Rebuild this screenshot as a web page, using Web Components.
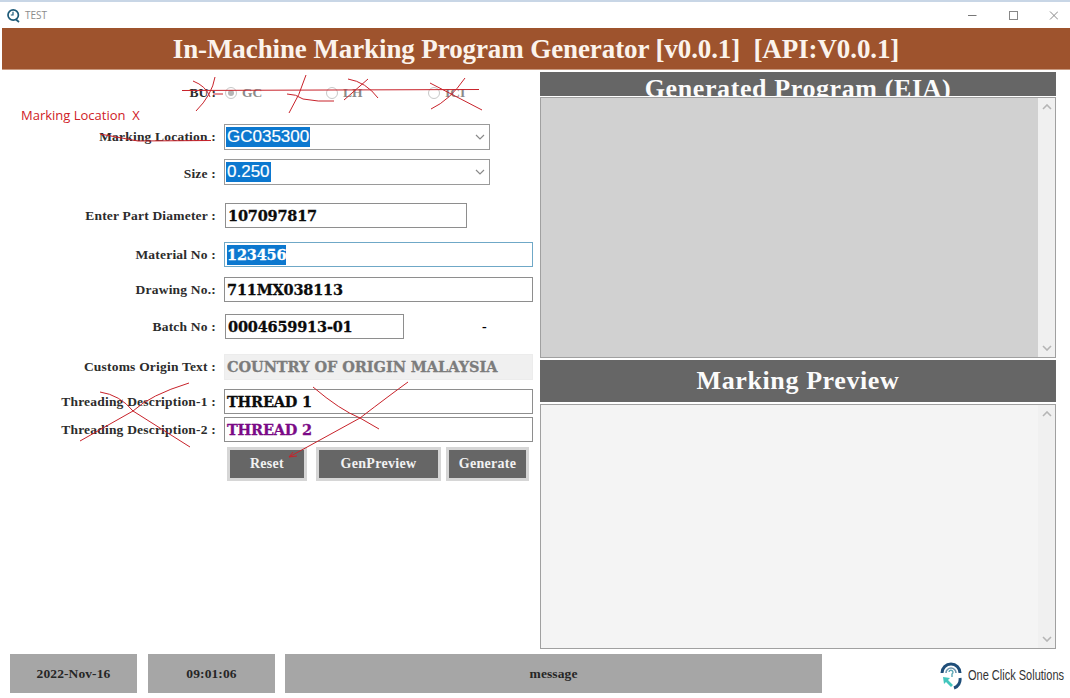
<!DOCTYPE html>
<html><head><meta charset="utf-8">
<style>
html,body{margin:0;padding:0;background:#fff}
body{width:1070px;height:698px;overflow:hidden;position:relative;font-family:"Liberation Serif",serif}
main{display:flex;height:584px}
</style></head>
<body>
<win-bar></win-bar>
<app-header>In-Machine Marking Program Generator [v0.0.1]&nbsp; [API:V0.0.1]</app-header>
<main>
  <form-panel></form-panel>
  <side-panel></side-panel>
</main>
<status-bar></status-bar>
<red-marks></red-marks>
<script>
function def(name,css,html){
  customElements.define(name,class extends HTMLElement{
    constructor(){super();const r=this.attachShadow({mode:'open'});
      r.innerHTML='<style>'+css+'</style>'+html;}
  });
}
const DOWN='<svg width="10" height="6" viewBox="0 0 10 6"><path d="M1 1l4 4 4-4" fill="none" stroke="#8a8a8a" stroke-width="1.2"/></svg>';
const UP='<svg width="10" height="6" viewBox="0 0 10 6"><path d="M1 5l4-4 4 4" fill="none" stroke="#b5b5b5" stroke-width="1.6"/></svg>';
const DOWN2='<svg width="10" height="6" viewBox="0 0 10 6"><path d="M1 1l4 4 4-4" fill="none" stroke="#b5b5b5" stroke-width="1.6"/></svg>';

def('win-bar',`:host{display:flex;align-items:center;height:26px;border-top:2px solid #c8d6e6;background:#fff;font:10px "Open Sans",sans-serif;color:#8b8b8b}
.ic{margin:0 4px 0 6px;display:block}.sp{flex:1}.c{display:flex;align-items:center;margin-right:12px}
.c svg{display:block}`,`
<svg class="ic" width="15" height="15" viewBox="0 0 15 15"><circle cx="7.2" cy="7" r="5.2" fill="none" stroke="#1d5a78" stroke-width="1.7"/><path d="M7 3.8V7H4.8" fill="none" stroke="#1d5a78" stroke-width="1.2"/><path d="M10 11.5l3 2.5" stroke="#1d5a78" stroke-width="1.7"/></svg>
<span>TEST</span><span class="sp"></span>
<span class="c"><svg width="96" height="11" viewBox="0 0 96 11"><path d="M6 5.5h8.5" stroke="#777" fill="none"/><rect x="47.5" y="1.5" width="8" height="8" fill="none" stroke="#888"/><path d="M88 1.5l8 8M96 1.5l-8 8" stroke="#888" fill="none"/></svg></span>`);

def('app-header',`:host{display:block;height:41px;margin:0 0 0 2px;border-bottom:1px solid #c99a80;background:#9e532d;color:#fbf3ec;font:bold 27px/43px "Liberation Serif",serif;text-align:center;letter-spacing:-.1px}`,`<slot></slot>`);

def('form-row',`:host{display:flex;align-items:center;height:var(--h,25px);margin-top:var(--m,0)}
.l{width:216px;text-align:right;font:bold 13.5px "Liberation Serif",serif;color:#2c2c2c;white-space:nowrap;flex:none;letter-spacing:.2px}
.s{flex:none;width:8px}`,`<span class="l"><slot name="label"></slot></span><span class="s"></span><slot></slot>`);

def('text-box',`:host{display:flex;align-items:center;box-sizing:border-box;height:100%;width:309px;border:1px solid #8e8e8e;background:#fff;padding-left:2px;font:bold 14.5px "DejaVu Serif",serif;color:#0b0b0b;white-space:nowrap;overflow:hidden;letter-spacing:-.2px;-webkit-text-stroke:.3px currentColor}
:host([short]){margin-left:1px}
:host([active]){border-color:#6fa8c7}
:host([disabled]){background:#f0f0f0;border-color:#ececec;color:#7c7c7c;letter-spacing:-.05px}
:host([purple]){color:#7b0a86}
span{display:inline-block;line-height:20px}
:host([active]) span{background:#0c78cf;color:#fff}`,`<span><slot></slot></span>`);

def('combo-box',`:host{display:flex;align-items:center;box-sizing:border-box;height:26px;width:266px;border:1px solid #9a9a9a;background:#fff;padding-left:1px;font:17px "Liberation Sans",sans-serif;-webkit-text-stroke:.2px currentColor}
span{background:#0c78cf;color:#fff;line-height:20px;padding:0 1px}
i{flex:1}svg{margin-right:4px}`,`<span><slot></slot></span><i></i>${DOWN}`);

def('radio-opt',`:host{display:inline-flex;align-items:center;gap:5px;font:bold 13.5px "Liberation Serif",serif;color:#8a8a8a;width:var(--w,auto)}
b{display:block;box-sizing:border-box;width:12px;height:12px;border-radius:50%;border:1px solid #c8c8c8;background:#fff}
:host([on]) b::after{content:"";display:block;width:6px;height:6px;margin:2px;border-radius:50%;background:#b5b5b5}`,`<b></b><slot></slot>`);

def('gray-btn',`:host{display:flex;align-items:center;justify-content:center;box-sizing:border-box;height:34px;width:var(--w);background:#666;border:3px solid #d6d6d6;color:#f2f2f2;font:bold 14px "Liberation Serif",serif;letter-spacing:.3px}`,`<slot></slot>`);

def('form-panel',`:host{display:block;flex:none;width:540px;box-sizing:border-box}
.bu{display:flex;align-items:center;height:25px;margin-top:10px}
.bl{width:216px;text-align:right;font:bold 13.5px "Liberation Serif",serif;color:#2c2c2c;flex:none}
.rad{display:flex;margin-left:9px}
.btns{display:flex;margin:5px 0 0 227px;gap:9px}
.btns gray-btn:last-child{margin-left:-4px}
.dash{flex:none;margin-left:78px;font:bold 14px "Liberation Serif",serif}
.low{display:block;padding-top:4px}`,`
<div class="bu"><span class="bl">BU :</span><span class="rad"><radio-opt on style="--w:101px">GC</radio-opt><radio-opt style="--w:102px">LH</radio-opt><radio-opt>ICI</radio-opt></span></div>
<form-row style="--h:26px;--m:19px"><span slot="label">Marking Location :</span><combo-box>GC035300</combo-box></form-row>
<form-row style="--h:26px;--m:9px"><span slot="label" class="low">Size :</span><combo-box>0.250</combo-box></form-row>
<form-row style="--m:18px"><span slot="label">Enter Part Diameter :</span><text-box short style="width:242px">107097817</text-box></form-row>
<form-row style="--m:14px"><span slot="label">Material No :</span><text-box active>123456</text-box></form-row>
<form-row style="--m:10px"><span slot="label">Drawing No.:</span><text-box>711MX038113</text-box></form-row>
<form-row style="--m:12px"><span slot="label">Batch No :</span><text-box short style="width:179px">0004659913-01</text-box><span class="dash">-</span></form-row>
<form-row style="--h:26px;--m:15px"><span slot="label">Customs Origin Text :</span><text-box disabled>COUNTRY OF ORIGIN MALAYSIA</text-box></form-row>
<form-row style="--m:9px"><span slot="label">Threading Description-1 :</span><text-box>THREAD 1</text-box></form-row>
<form-row style="--m:3px"><span slot="label">Threading Description-2 :</span><text-box purple>THREAD 2</text-box></form-row>
<div class="btns"><gray-btn style="--w:80px">Reset</gray-btn><gray-btn style="--w:125px">GenPreview</gray-btn><gray-btn style="--w:83px">Generate</gray-btn></div>`);

def('pane-head',`:host{display:block;background:#666;color:#fbfbfb;text-align:center;font:bold 26px/var(--lh) "Liberation Serif",serif;height:var(--h);overflow:hidden;letter-spacing:.6px;white-space:nowrap}`,`<slot></slot>`);

def('scroll-area',`:host{display:flex;box-sizing:border-box;height:var(--h);border:1px solid #a0a0a0;background:var(--bg)}
.f{flex:1}.b{width:17px;background:#f0f0f0;display:flex;flex-direction:column;justify-content:space-between;align-items:center;padding:6px 0;box-sizing:border-box}
svg{display:block}`,`<div class="f"></div><div class="b">${UP}${DOWN2}</div>`);

def('side-panel',`:host{display:flex;flex-direction:column;width:516px;padding-top:2px;box-sizing:border-box}
.a{margin-top:1px}.c{margin-top:2px}.d{margin-top:2px}`,`
<pane-head style="--h:24px;--lh:34px">Generated Program (EIA)</pane-head>
<scroll-area class="a" style="--h:261px;--bg:#d1d1d1"></scroll-area>
<pane-head class="c" style="--h:42px;--lh:42px">Marking Preview</pane-head>
<scroll-area class="d" style="--h:245px;--bg:#f4f4f4"></scroll-area>`);

def('status-cell',`:host{display:flex;align-items:center;justify-content:center;height:39px;background:#a6a6a6;color:#262626;font:bold 13.5px "Liberation Serif",serif;width:var(--w);flex:none;letter-spacing:.1px}`,`<slot></slot>`);

def('status-bar',`:host{display:flex;align-items:flex-start;padding:0 0 0 10px;gap:11px}
.g{flex:none;display:flex;align-items:center;margin-left:107px;margin-top:6px;gap:6px;color:#333;white-space:nowrap}
.t{display:block;width:98px;font:15.5px "Liberation Sans",sans-serif;transform:scaleX(.71);transform-origin:left center}
svg{display:block}`,`
<status-cell style="--w:127px">2022-Nov-16</status-cell>
<status-cell style="--w:127px;margin-right:-1px">09:01:06</status-cell>
<status-cell style="--w:537px">message</status-cell>
<div class="g"><svg width="22" height="30" viewBox="0 0 22 30">
<path d="M2 13A9 9 0 0 1 20 13" fill="none" stroke="#1f4e79" stroke-width="3"/>
<path d="M6 13A5 5 0 0 1 16 13" fill="none" stroke="#6f95ad" stroke-width="1.6"/>
<path d="M3 17l7 1-2 2 5 5-2 2-5-5-2 2z" fill="#43c6bd"/>
<path d="M9 12a2 2 0 1 1 3 2v3" fill="none" stroke="#5aa7b5" stroke-width="1.4"/>
<path d="M20 18a9 9 0 0 1-6 10" fill="none" stroke="#1f4e79" stroke-width="3"/>
</svg><span class="t">One Click Solutions</span></div>`);

def('red-marks',`:host{position:absolute;left:0;top:0;width:1070px;height:698px;pointer-events:none;display:block}
svg{position:absolute;left:0;top:0}
span{position:absolute;left:21px;top:106px;font:13px "Open Sans",sans-serif;color:#cf2027;white-space:pre}`,`
<span>Marking Location  X</span>
<svg width="1070" height="698" fill="none" stroke="#c8222a" stroke-width="1">
<path d="M182 90.5L479 89.5"/>
<path d="M193 81Q206 86 210 97M215 77Q212 95 196 111M213 94H223"/>
<path d="M306 75Q300 95 289 113M287 94Q296 94 303 99Q318 102 334 101"/>
<path d="M348 79Q366 82 378 98M368 79L344 100"/>
<path d="M430 83L482 110M465 78Q450 100 431 109"/>
<path d="M100 134L138 141L211 140.5"/>
<path d="M100 392Q120 395 133 411L190 447M189 383Q150 395 133 411L80 441"/>
<path d="M313 387Q340 410 360 418L379 429M408 382Q390 395 360 418L289 457L293 452M289 457L297 456"/>
</svg>`);
</script>
</body></html>
